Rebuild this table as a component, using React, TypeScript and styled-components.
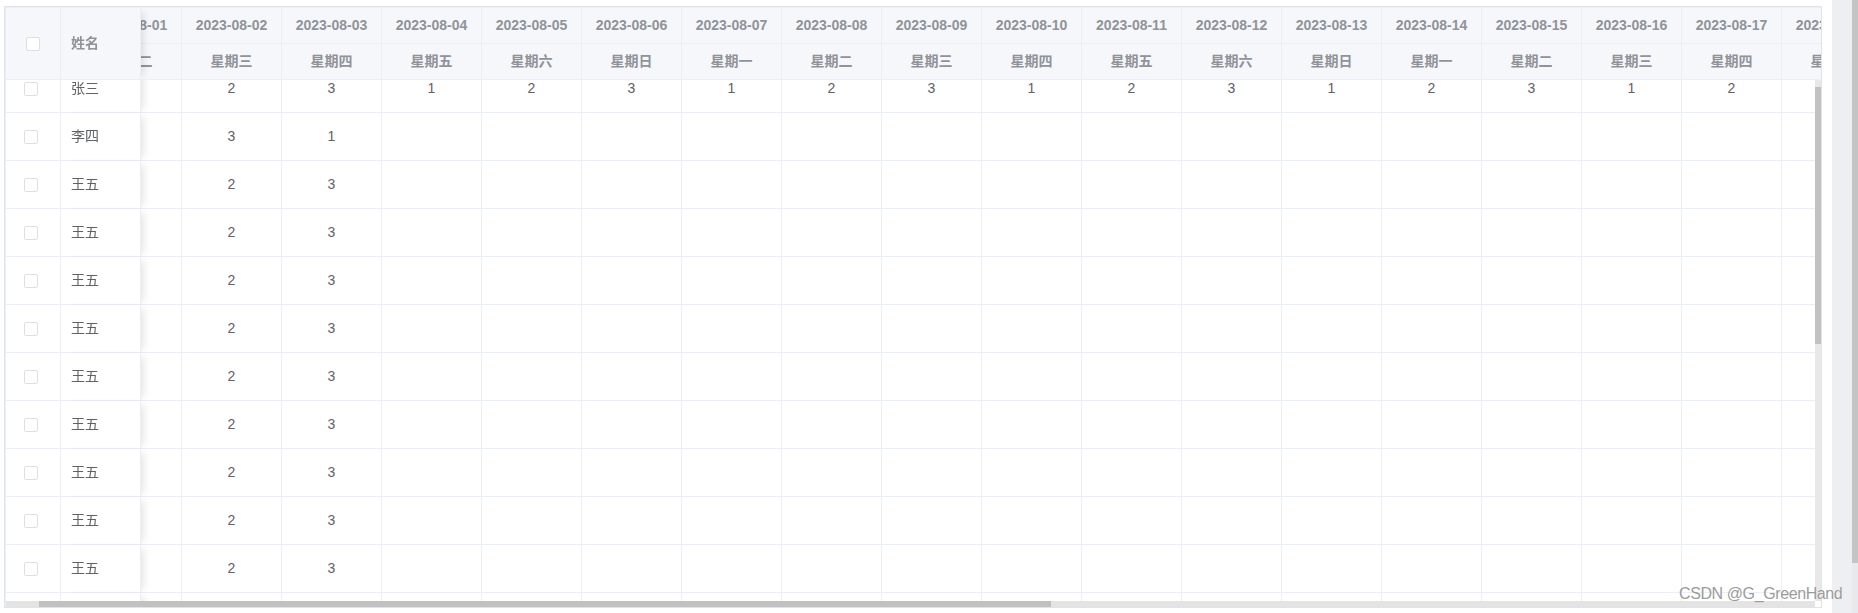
import React, { useLayoutEffect, useRef } from "react";
import styled, { createGlobalStyle } from "styled-components";

const GlobalStyle = createGlobalStyle`
  html, body { margin: 0; padding: 0; background: #ffffff; }
  body {
    font-family: "Liberation Sans", Arial, "Noto Sans CJK SC", sans-serif;
    -webkit-font-smoothing: antialiased;
  }
`;

const CHECK_W = 55;
const NAME_W = 80;
const DAY_W = 100;
const ROW_H = 48;
const BAR = 6;
const SCROLL_LEFT = 59;
const SCROLL_TOP = 15;
const WEEK = ["星期日", "星期一", "星期二", "星期三", "星期四", "星期五", "星期六"];

const days = Array.from({ length: 31 }, (_, i) => {
  const d = new Date(2023, 7, i + 1);
  return {
    date: `2023-08-${String(i + 1).padStart(2, "0")}`,
    week: WEEK[d.getDay()],
  };
});

type Person = { name: string; values: (number | null)[] };

const mk = (name: string, fn: (i: number) => number | null): Person => ({
  name,
  values: days.map((_, i) => fn(i)),
});

const people: Person[] = [
  mk("张三", (i) => (i % 3) + 1),
  mk("李四", (i) => (i < 3 ? ((i + 1) % 3) + 1 : null)),
  ...Array.from({ length: 20 }, () => mk("王五", (i) => (i < 3 ? (i % 3) + 1 : null))),
];

const CONTENT_W = CHECK_W + NAME_W + DAY_W * days.length;
const CONTENT_H = ROW_H * people.length;

// viewport size of the body (frame 1818x602, minus borders, header, scrollbars)
const VIEW_W = 1818 - 2 - 1 - BAR;
const VIEW_H = 602 - 2 - 1 - 72 - BAR;

const Page = styled.div`
  position: relative;
  display: flex;
  align-items: flex-start;
  width: 1858px;
  height: 613px;
  overflow: hidden;
`;

const TableArea = styled.div`
  padding: 6px 0 0 4px;
`;

const Frame = styled.div`
  width: 1818px;
  height: 602px;
  box-sizing: border-box;
  border: 1px solid #dfe3ea;
  overflow: hidden;
`;

const Inner = styled.div`
  height: 100%;
  box-sizing: border-box;
  border-top: 1px solid #ebeef5;
  border-left: 1px solid #ebeef5;
  display: flex;
  flex-direction: column;
`;

const HeaderScroll = styled.div`
  flex: none;
  overflow: hidden;
  background: #f5f7fa;
`;

const HeaderGrid = styled.div`
  display: grid;
  width: ${CONTENT_W}px;
  grid-template-columns: ${CHECK_W}px ${NAME_W}px repeat(${days.length}, ${DAY_W}px);
  grid-template-rows: 36px 36px;
  background: #f5f7fa;
`;

const Th = styled.div<{ $sticky?: "check" | "name"; $span?: boolean }>`
  box-sizing: border-box;
  display: flex;
  align-items: center;
  justify-content: ${(p) => (p.$sticky === "name" ? "flex-start" : "center")};
  padding: ${(p) => (p.$sticky === "name" ? "0 10px" : "0")};
  border-right: 1px solid #ebeef5;
  border-bottom: 1px solid #ebeef5;
  background: #f5f7fa;
  color: #909399;
  font-size: 14px;
  font-weight: bold;
  line-height: 23px;
  white-space: nowrap;
  overflow: hidden;
  ${(p) => (p.$span ? "grid-row: span 2;" : "")}
  ${(p) =>
    p.$sticky
      ? `position: sticky; left: ${p.$sticky === "name" ? CHECK_W : 0}px; z-index: 3; overflow: visible;`
      : ""}
  ${(p) => (p.$sticky === "name" ? "box-shadow: 6px 0 8px -4px rgba(0, 0, 0, 0.12);" : "")}
`;

const BodyArea = styled.div`
  flex: 1;
  min-height: 0;
  display: grid;
  grid-template-columns: ${VIEW_W}px ${BAR}px;
  grid-template-rows: ${VIEW_H}px ${BAR}px;
`;

const Viewport = styled.div`
  overflow: hidden;
`;

const Body = styled.div`
  width: ${CONTENT_W}px;
`;

const Row = styled.div`
  display: flex;
  height: ${ROW_H}px;
`;

const Td = styled.div<{ $sticky?: "check" | "name"; $w: number }>`
  flex: none;
  box-sizing: border-box;
  width: ${(p) => p.$w}px;
  height: ${ROW_H}px;
  display: flex;
  align-items: center;
  justify-content: ${(p) => (p.$sticky === "name" ? "flex-start" : "center")};
  padding: ${(p) => (p.$sticky === "name" ? "0 10px" : "0")};
  border-right: 1px solid #ebeef5;
  border-bottom: 1px solid #ebeef5;
  background: #ffffff;
  color: #606266;
  font-size: 14px;
  line-height: 23px;
  white-space: nowrap;
  ${(p) =>
    p.$sticky
      ? `position: sticky; left: ${p.$sticky === "name" ? CHECK_W : 0}px; z-index: 2;`
      : ""}
  ${(p) => (p.$sticky === "name" ? "box-shadow: 6px 0 8px -4px rgba(0, 0, 0, 0.12);" : "")}
`;

const CheckCell = styled.div<{ $offset: number }>`
  width: 100%;
  height: 100%;
  display: flex;
  align-items: center;
  padding-left: ${(p) => p.$offset}px;
  box-sizing: border-box;
`;

const Checkbox = styled.span`
  display: inline-block;
  width: 14px;
  height: 14px;
  box-sizing: border-box;
  border: 1px solid #dcdfe6;
  border-radius: 2px;
  background: #ffffff;
`;

const VTrack = styled.div`
  background: #e8e8e8;
  display: flex;
  flex-direction: column;
`;

const HTrack = styled.div`
  background: #e4e4e4;
  display: flex;
`;

const Thumb = styled.div`
  flex: none;
  background: #c1c1c1;
`;

const Corner = styled.div`
  background: #ffffff;
`;

const Gutter = styled.div`
  margin-left: 10px;
  display: flex;
  height: 613px;
`;

const GutterTrack = styled.div`
  width: 20px;
  height: 100%;
  background: #eeeff3;
`;

const GutterBar = styled.div`
  width: 6px;
  height: 100%;
  background: #e9e9ed;
  display: flex;
  flex-direction: column;
`;

const GutterThumb = styled.div`
  height: 563px;
  background: #c4c4c4;
`;

const Watermark = styled.div`
  position: absolute;
  left: 1679px;
  top: 584px;
  font-family: "Liberation Sans", Arial, sans-serif;
  font-size: 16px;
  line-height: 20px;
  color: #9b9b9b;
  letter-spacing: -0.4px;
  text-shadow: 0 0 1px rgba(255, 255, 255, 0.9);
  white-space: nowrap;
  pointer-events: none;
`;

const vThumbLen = Math.round((VIEW_H * VIEW_H) / CONTENT_H);
const vThumbTop = Math.round((SCROLL_TOP * VIEW_H) / CONTENT_H);
const hThumbLen = Math.round((VIEW_W * VIEW_W) / CONTENT_W);
const hThumbLeft = Math.round((SCROLL_LEFT * VIEW_W) / CONTENT_W);

export default function App() {
  const headRef = useRef<HTMLDivElement>(null);
  const bodyRef = useRef<HTMLDivElement>(null);

  useLayoutEffect(() => {
    if (bodyRef.current) {
      bodyRef.current.scrollLeft = SCROLL_LEFT;
      bodyRef.current.scrollTop = SCROLL_TOP;
    }
    if (headRef.current) headRef.current.scrollLeft = SCROLL_LEFT;
  }, []);

  return (
    <Page>
      <GlobalStyle />
      <TableArea>
        <Frame>
          <Inner>
            <HeaderScroll ref={headRef}>
              <HeaderGrid>
                <Th $sticky="check" $span>
                  <CheckCell $offset={20}>
                    <Checkbox />
                  </CheckCell>
                </Th>
                <Th $sticky="name" $span>
                  姓名
                </Th>
                {days.map((d) => (
                  <Th key={d.date}>{d.date}</Th>
                ))}
                {days.map((d) => (
                  <Th key={d.date + "w"}>{d.week}</Th>
                ))}
              </HeaderGrid>
            </HeaderScroll>
            <BodyArea>
              <Viewport ref={bodyRef}>
                <Body>
                  {people.map((p, r) => (
                    <Row key={r}>
                      <Td $sticky="check" $w={CHECK_W}>
                        <CheckCell $offset={18}>
                          <Checkbox />
                        </CheckCell>
                      </Td>
                      <Td $sticky="name" $w={NAME_W}>
                        {p.name}
                      </Td>
                      {p.values.map((v, i) => (
                        <Td key={i} $w={DAY_W}>
                          {v ?? ""}
                        </Td>
                      ))}
                    </Row>
                  ))}
                </Body>
              </Viewport>
              <VTrack>
                <Thumb style={{ marginTop: vThumbTop, height: vThumbLen }} />
              </VTrack>
              <HTrack>
                <Thumb style={{ marginLeft: hThumbLeft, width: hThumbLen }} />
              </HTrack>
              <Corner />
            </BodyArea>
          </Inner>
        </Frame>
      </TableArea>
      <Gutter>
        <GutterTrack />
        <GutterBar>
          <GutterThumb />
        </GutterBar>
      </Gutter>
      <Watermark>CSDN @G_GreenHand</Watermark>
    </Page>
  );
}
